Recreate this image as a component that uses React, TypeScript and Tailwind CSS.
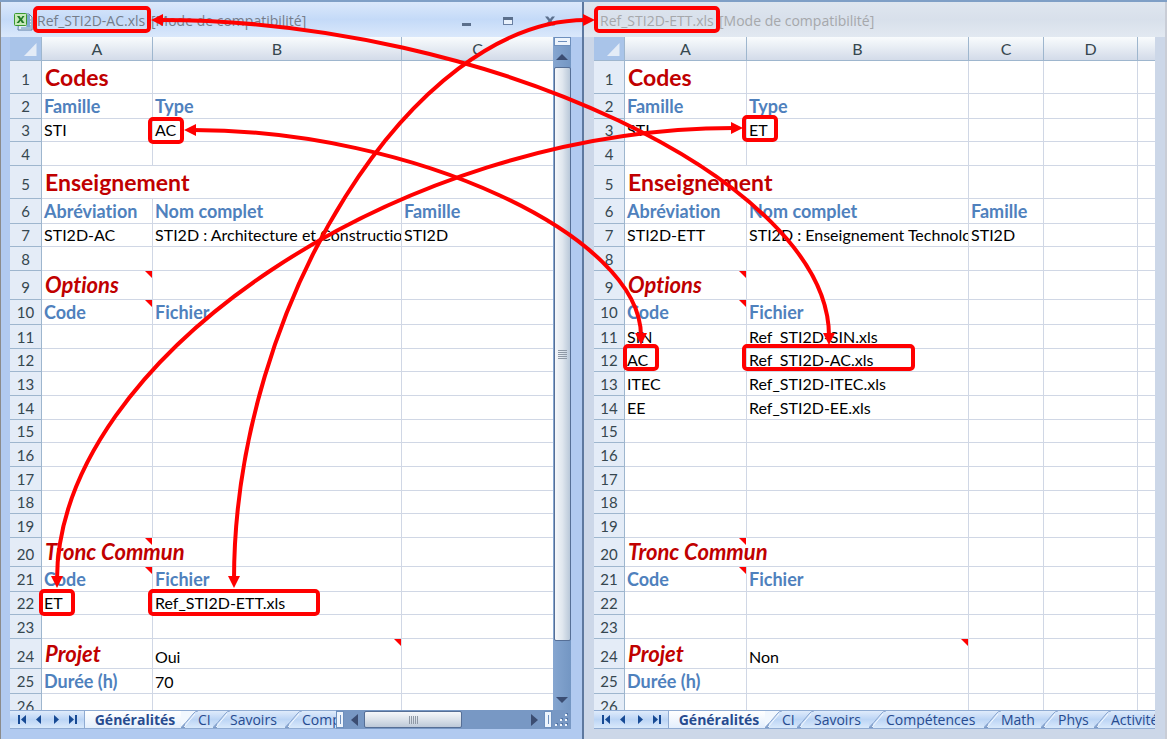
import React from "react";

type Kind = "title" | "option" | "label" | "text";
type Cell = { text?: string; kind?: Kind; span?: number; note?: "cell" | "first" };
type Row = { height: string; head: string; cells?: Cell[] };
type Tab = { name: string; width: string };

const kindClass: Record<Kind, string> = {
  title: "pl-[3px] pb-px text-[23px] leading-[30px] font-bold text-[#c00000]",
  option: "pl-[3px] pb-px text-[22px] leading-[26px] font-bold italic text-[#c00000]",
  label: "pl-[2px] pb-px text-[18px] leading-[22px] font-bold text-[#4f81bd]",
  text: "pl-[2px] text-[16px] leading-[22px] text-black",
};

const title = (text: string, span = 1): Cell => ({ text, kind: "title", span });
const label = (text: string): Cell => ({ text, kind: "label" });
const plain = (text: string): Cell => ({ text, kind: "text" });

const short = { height: "h-[23px]", head: "pb-0" };
const normal = { height: "h-[24px]", head: "pb-0" };
const labelled = { height: "h-[25px]", head: "pb-px" };
const section = { height: "h-[29px]", head: "pb-px" };
const tall = { height: "h-[33px]", head: "pb-[3px]" };

function buildRows(d: {
  type: string;
  abbr: string;
  full: string;
  options: [string, string][];
  common: [string, string];
  project: string;
  hours: string;
}): Row[] {
  const opt = (i: number): Cell[] => {
    const o = d.options[i];
    return o ? [plain(o[0]), plain(o[1])] : [];
  };
  return [
    { ...tall, cells: [title("Codes")] },
    { ...labelled, cells: [label("Famille"), label("Type")] },
    { ...short, cells: [plain("STI"), plain(d.type)] },
    { ...normal },
    { ...tall, cells: [title("Enseignement", 2)] },
    { ...labelled, cells: [label("Abréviation"), label("Nom complet"), label("Famille")] },
    { ...short, cells: [plain(d.abbr), plain(d.full), plain("STI2D")] },
    { ...normal },
    { ...section, cells: [{ text: "Options", kind: "option", note: "cell" }] },
    { ...labelled, cells: [{ text: "Code", kind: "label", note: "cell" }, label("Fichier")] },
    { ...normal, cells: opt(0) },
    { ...short, cells: opt(1) },
    { ...normal, cells: opt(2) },
    { ...normal, cells: opt(3) },
    { ...short },
    { ...normal },
    { ...normal },
    { ...short },
    { ...normal },
    { ...section, cells: [{ text: "Tronc Commun", kind: "option", span: 2, note: "first" }] },
    { ...labelled, cells: [{ text: "Code", kind: "label", note: "cell" }, label("Fichier")] },
    { ...short, cells: [plain(d.common[0]), plain(d.common[1])] },
    { ...normal },
    {
      height: "h-[30px]",
      head: "pb-px",
      cells: [{ text: "Projet", kind: "option" }, { text: d.project, kind: "text", note: "cell" }],
    },
    { ...labelled, cells: [label("Durée (h)"), plain(d.hours)] },
  ];
}

const leftRows = buildRows({
  type: "AC",
  abbr: "STI2D-AC",
  full: "STI2D : Architecture et Construction",
  options: [],
  common: ["ET", "Ref_STI2D-ETT.xls"],
  project: "Oui",
  hours: "70",
});

const rightRows = buildRows({
  type: "ET",
  abbr: "STI2D-ETT",
  full: "STI2D : Enseignement Technologique",
  options: [
    ["SIN", "Ref_STI2D-SIN.xls"],
    ["AC", "Ref_STI2D-AC.xls"],
    ["ITEC", "Ref_STI2D-ITEC.xls"],
    ["EE", "Ref_STI2D-EE.xls"],
  ],
  common: ["", ""],
  project: "Non",
  hours: "",
});

const tabs: Tab[] = [
  { name: "Généralités", width: "w-[96px]" },
  { name: "CI", width: "w-[32px]" },
  { name: "Savoirs", width: "w-[72px]" },
  { name: "Compétences", width: "w-[115px]" },
  { name: "Math", width: "w-[57px]" },
  { name: "Phys", width: "w-[53px]" },
  { name: "Activités", width: "w-[90px]" },
];

function NoteMark({ className }: { className: string }) {
  return (
    <svg className={"absolute top-0 " + className} width="7" height="7" viewBox="0 0 7 7" aria-hidden="true">
      <path d="M0 0H7V7Z" fill="#f00" />
    </svg>
  );
}

function Sheet({
  rows,
  columns,
  widths,
  firstEdge,
  name,
}: {
  rows: Row[];
  columns: string[];
  widths: string[];
  firstEdge: string;
  name: string;
}) {
  return (
    <table
      aria-label={name}
      className="w-full table-fixed border-separate border-spacing-0 bg-white font-[Lato,Carlito,sans-serif] [font-variant-ligatures:none]"
    >
      <colgroup>
        {widths.map((w, i) => (
          <col key={i} className={w} />
        ))}
      </colgroup>
      <thead>
        <tr className="h-[24px]">
          <td className="border-r border-b border-[#9eb6ce] bg-[#a9c4e9] p-0 align-bottom">
            <svg className="ml-auto mr-1 mb-1 block" width="13" height="13" viewBox="0 0 13 13" aria-hidden="true">
              <path d="M12.500 0V13H0Z" fill="#e4ecf7" />
            </svg>
          </td>
          {columns.map((c, i) => (
            <th
              key={i}
              scope="col"
              className={
                "border-b border-[#9eb6ce] bg-linear-to-b from-[#f9fcfd] to-[#d3dbe9] p-0 text-center text-[16px] leading-[22px] font-normal text-[#36474f] " +
                (i < columns.length - 1 ? "border-r" : "")
              }
            >
              {c}
            </th>
          ))}
        </tr>
      </thead>
      <tbody>
        {rows.map((r, i) => {
          const cells: Cell[] = [...(r.cells ?? [])];
          let used = cells.reduce((n, c) => n + (c.span ?? 1), 0);
          while (used < columns.length) {
            cells.push({});
            used++;
          }
          return (
            <tr key={i} className={r.height}>
              <th
                scope="row"
                className={
                  "border-r border-b border-[#9eb6ce] bg-[#e4ecf7] p-0 text-center align-bottom text-[15px] leading-[22px] font-normal text-[#36474f] " +
                  r.head
                }
              >
                {i + 1}
              </th>
              {cells.map((c, j) => (
                <td
                  key={j}
                  colSpan={c.span ?? 1}
                  className={
                    "relative overflow-hidden border-b border-[#d0d7e5] p-0 align-bottom whitespace-nowrap " +
                    (j < cells.length - 1 ? "border-r " : "") +
                    kindClass[c.kind ?? "text"]
                  }
                >
                  {c.text}
                  {c.note === "cell" && <NoteMark className="right-0" />}
                  {c.note === "first" && <NoteMark className={firstEdge} />}
                </td>
              ))}
            </tr>
          );
        })}
        <tr>
          <th
            scope="row"
            className="border-r border-[#9eb6ce] bg-[#e4ecf7] p-0 text-center text-[15px] leading-[24px] font-normal text-[#36474f]"
          >
            <div className="h-4 overflow-hidden">26</div>
          </th>
          {columns.map((c, j) => (
            <td key={c + j} className={"border-[#d0d7e5] p-0 " + (j < columns.length - 1 ? "border-r" : "")} />
          ))}
        </tr>
      </tbody>
    </table>
  );
}

const navIcons = [
  { name: "Première feuille", d: "M1 1H3V10H1ZM9 1V10L4 5.500Z" },
  { name: "Feuille précédente", d: "M7 1V10L2 5.500Z" },
  { name: "Feuille suivante", d: "M3 1V10L8 5.500Z" },
  { name: "Dernière feuille", d: "M1 1V10L6 5.500ZM7 1H9V10H7Z" },
];

function TabStrip() {
  return (
    <div className="flex h-[19px] min-w-0 flex-1 overflow-hidden border-t border-b border-[#8fabd2] bg-linear-to-b from-[#dfebfb] via-[#bcd5f5] to-[#d9e9fb] font-['Open_Sans','Noto_Sans',sans-serif]">
      <div className="flex w-[75px] shrink-0 items-center justify-around border-r border-[#8fabd2] px-[3px]">
        {navIcons.map((n) => (
          <button key={n.name} type="button" aria-label={n.name} className="flex">
            <svg width="10" height="11" viewBox="0 0 10 11" aria-hidden="true">
              <path d={n.d} fill="#174a94" />
            </svg>
          </button>
        ))}
      </div>
      {tabs.map((t, i) => (
        <button
          key={t.name}
          type="button"
          className={
            "flex shrink-0 items-center text-[14px] leading-[17px] whitespace-nowrap text-[#274b8f] " +
            t.width +
            (i === 0 ? " justify-center bg-linear-to-b from-white to-[#e3eefc] pl-1 font-bold" : "")
          }
        >
          {i > 0 && (
            <svg className="shrink-0" width="17" height="17" viewBox="0 0 17 17" aria-hidden="true">
              <path d={i === 1 ? "M0 0H15L0 17Z" : "M0 10V17L5 13Z"} fill={i === 1 ? "#f1f7fe" : "#c5daf6"} />
              <path d="M-1 17L4 12V17Z" fill="#7f9dc9" />
              <path d="M1 16L12 3Q14 0 17 0" fill="none" stroke="#8ba7d0" />
              <path d="M3 16L14 3" fill="none" stroke="#f4f9ff" />
            </svg>
          )}
          {t.name}
        </button>
      ))}
    </div>
  );
}

function SplitHandle() {
  return (
    <span className="flex h-[17px] w-2 shrink-0 items-center justify-center border border-[#6d8fbd] bg-[#edf4fc]">
      <span className="h-[9px] w-px bg-[#6d8fbd]" />
    </span>
  );
}

function HorizontalScroll() {
  return (
    <div className="flex h-[19px] w-[235px] shrink-0 items-center bg-[#7898c4]">
      <SplitHandle />
      <button type="button" aria-label="Défiler à gauche" className="flex w-5 justify-center">
        <svg width="7" height="12" viewBox="0 0 7 12" aria-hidden="true">
          <path d="M7 0V12L0 6Z" fill="#3b4d72" />
        </svg>
      </button>
      <div className="flex h-[17px] w-[98px] items-center justify-center gap-px rounded-[2px] border border-[#566f96] bg-linear-to-b from-[#f5f7fa] via-[#dbe2ea] to-[#bdc9d8]">
        {[0, 1, 2, 3, 4].map((n) => (
          <span key={n} className="h-2 w-px bg-[#8f99a6]" />
        ))}
      </div>
      <span className="flex-1" />
      <button type="button" aria-label="Défiler à droite" className="flex w-5 justify-center">
        <svg width="7" height="12" viewBox="0 0 7 12" aria-hidden="true">
          <path d="M0 0V12L7 6Z" fill="#3b4d72" />
        </svg>
      </button>
      <SplitHandle />
      <svg className="shrink-0" width="19" height="19" viewBox="0 0 19 19" aria-hidden="true">
        {[
          [13, 4],
          [8, 9],
          [13, 9],
          [3, 14],
          [8, 14],
          [13, 14],
        ].map(([x, y]) => (
          <g key={x + "-" + y}>
            <rect x={x + 1} y={y - 1} width="2" height="2" fill="#5576a6" />
            <rect x={x} y={y} width="2" height="2" fill="#f1f6fc" />
          </g>
        ))}
      </svg>
    </div>
  );
}

function VerticalScroll() {
  return (
    <div className="flex w-[18px] shrink-0 flex-col items-center bg-linear-to-r from-[#86a6d0] to-[#7396c3]">
      <span className="flex h-[9px] w-[17px] items-center justify-center border border-[#6d8fbd] bg-[#edf4fc]">
        <span className="h-px w-[9px] bg-[#6d8fbd]" />
      </span>
      <button type="button" aria-label="Défiler vers le haut" className="flex h-[21px] w-full items-center justify-center">
        <svg width="12" height="6" viewBox="0 0 12 6" aria-hidden="true">
          <path d="M0 6H12L6 0Z" fill="#3b4d72" />
        </svg>
      </button>
      <div className="flex h-[574px] w-[17px] flex-col items-center justify-center gap-px rounded-[2px] border border-[#566f96] bg-linear-to-r from-[#f5f7fa] via-[#dfe6ee] to-[#b9c8d9]">
        {[0, 1, 2, 3, 4].map((n) => (
          <span key={n} className="h-px w-[9px] bg-[#8f99a6]" />
        ))}
      </div>
      <span className="flex-1" />
      <button type="button" aria-label="Défiler vers le bas" className="flex h-[20px] w-full items-center justify-center">
        <svg width="12" height="6" viewBox="0 0 12 6" aria-hidden="true">
          <path d="M0 0H12L6 6Z" fill="#3b4d72" />
        </svg>
      </button>
    </div>
  );
}

function WorkbookIcon() {
  return (
    <svg className="mr-1 shrink-0" width="19" height="19" viewBox="0 0 19 19" aria-hidden="true">
      <path d="M5 2H15L18 5V18H4Z" fill="#e3edf6" stroke="#5f7fa3" />
      <path d="M12 8H17M12 11H17M12 14H17M7 16H17" stroke="#5f8fbb" />
      <rect x="13" y="3" width="3" height="12" fill="#7fa8cf" />
      <rect x="0.500" y="1.500" width="12" height="12" rx="1" fill="#c7e8b9" stroke="#3b9a2f" />
      <path d="M3 4H5.500L7 6.200L8.500 4H10.500L8 7.500L10.500 11H8L6.500 8.800L5 11H2.500L5.500 7.500Z" fill="#217a22" />
    </svg>
  );
}

export default function App() {
  return (
    <main className="relative flex min-h-[739px] border-t-2 border-[#7f9fc6] bg-[#ccd7e8]">
      <section
        aria-label="Ref_STI2D-AC.xls"
        className="flex w-[584px] shrink-0 flex-col border-r-2 border-l border-r-[#5d789f] border-l-[#8b8b8b] bg-[#b1caf0] pb-[11px]"
      >
        <header className="flex h-[35px] items-center bg-linear-to-b from-[#dbe8fb] via-[#c4daf8] to-[#dae8fb] pr-[26px] pl-[13px] pt-[3px]">
          <WorkbookIcon />
          <h1 className="flex font-['Open_Sans','Noto_Sans',sans-serif] text-[14px] leading-[18px] whitespace-nowrap text-[#757d8a]">
            <span className="w-[114px]">Ref_STI2D-AC.xls</span>
            <span>[Mode de compatibilité]</span>
          </h1>
          <div className="ml-auto flex items-center gap-[30px]">
            <button type="button" aria-label="Réduire">
              <svg width="12" height="12" viewBox="0 0 12 12" aria-hidden="true">
                <rect x="2" y="8" width="9" height="3" fill="#5b6f8c" />
              </svg>
            </button>
            <button type="button" aria-label="Agrandir">
              <svg width="12" height="12" viewBox="0 0 12 12" aria-hidden="true">
                <rect x="1.500" y="2.500" width="9" height="7" fill="#eaf2fc" stroke="#6a80a3" />
                <rect x="1" y="2" width="10" height="3" fill="#5b6f8c" />
              </svg>
            </button>
            <button type="button" aria-label="Fermer">
              <svg width="12" height="12" viewBox="0 0 12 12" aria-hidden="true">
                <path d="M1 1.500H4L6 4L8 1.500H11L7.500 6L11 10.500H8L6 8L4 10.500H1L4.500 6Z" fill="#5b6f8c" />
              </svg>
            </button>
          </div>
        </header>
        <div className="flex pr-[11px] pl-[9px]">
          <div className="min-w-0 flex-1">
            <Sheet
              name="Généralités, Ref_STI2D-AC.xls"
              rows={leftRows}
              columns={["A", "B", "C"]}
              widths={["w-[32px]", "w-[111px]", "w-[249px]", ""]}
              firstEdge="left-[103px]"
            />
          </div>
          <VerticalScroll />
        </div>
        <div className="flex pr-[11px] pl-[9px]">
          <TabStrip />
          <HorizontalScroll />
        </div>
      </section>

      <section
        aria-label="Ref_STI2D-ETT.xls"
        className="flex min-w-0 flex-1 flex-col border-r-2 border-[#c9cdd6] bg-[#ccd7e8] pb-[11px]"
      >
        <header className="flex h-[35px] items-center bg-linear-to-b from-[#dfe6ef] via-[#d8e0eb] to-[#e2e9f1] pt-[3px] pl-4">
          <h1 className="flex font-['Open_Sans','Noto_Sans',sans-serif] text-[14px] leading-[18px] whitespace-nowrap text-[#a6a8ab]">
            <span className="w-[119px]">Ref_STI2D-ETT.xls</span>
            <span>[Mode de compatibilité]</span>
          </h1>
        </header>
        <div className="pr-[10px] pl-[10px]">
          <Sheet
            name="Généralités, Ref_STI2D-ETT.xls"
            rows={rightRows}
            columns={["A", "B", "C", "D", ""]}
            widths={["w-[31px]", "w-[122px]", "w-[222px]", "w-[75px]", "w-[94px]", ""]}
            firstEdge="left-[114px]"
          />
          <div className="flex">
            <TabStrip />
          </div>
        </div>
      </section>

      <svg
        className="pointer-events-none absolute -top-0.5 left-0"
        width="1167"
        height="739"
        viewBox="0 0 1167 739"
        aria-hidden="true"
      >
        <g fill="none" stroke="#f00" strokeWidth="4">
          <path d="M160 20C489 20 829 182 829 336" />
          <path d="M193 130C414 130 641 236 641 336" />
          <path d="M734 128C400 128 57 358 57 580" />
          <path d="M586 20C414 20 234 304 234 580" />
          <rect x="35" y="8" width="114" height="23" rx="3" />
          <rect x="150" y="119" width="32" height="23" rx="3" />
          <rect x="596" y="8" width="122" height="23" rx="3" />
          <rect x="744" y="117" width="32" height="23" rx="3" />
          <rect x="625" y="346" width="32" height="23" rx="3" />
          <rect x="744" y="346" width="169" height="23" rx="3" />
          <rect x="41" y="591" width="32" height="23" rx="3" />
          <rect x="150" y="591" width="168" height="23" rx="3" />
        </g>
        <g fill="#f00">
          <path d="M151 20L163 14V26Z" />
          <path d="M829 345L823 333H835Z" />
          <path d="M184 130L196 124V136Z" />
          <path d="M641 345L635 333H647Z" />
          <path d="M743 128L731 122V134Z" />
          <path d="M57 588L51 576H63Z" />
          <path d="M595 20L583 14V26Z" />
          <path d="M234 588L228 576H240Z" />
        </g>
      </svg>
    </main>
  );
}
